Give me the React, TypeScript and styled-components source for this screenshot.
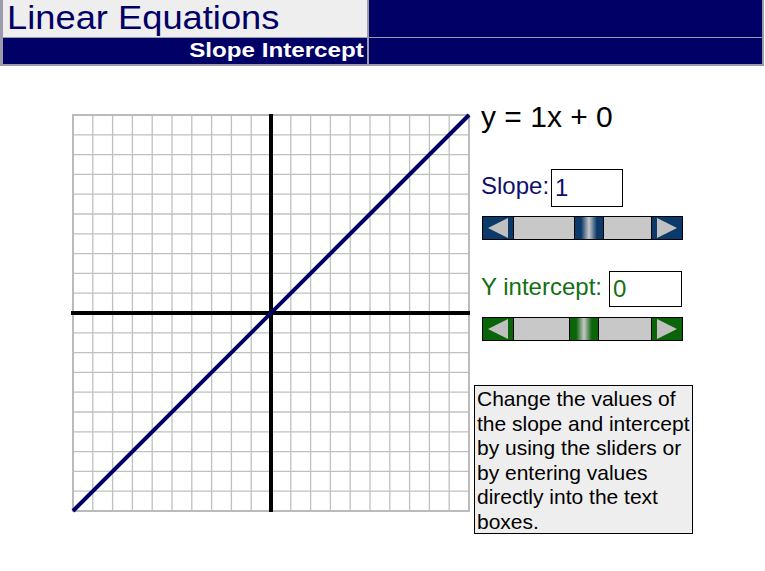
import React, { useState } from 'react';
import styled, { createGlobalStyle } from 'styled-components';

const GlobalStyle = createGlobalStyle`
  html, body { margin: 0; padding: 0; background: #ffffff; }
  body { font-family: "Liberation Sans", Arial, sans-serif; }
`;

const Page = styled.div`
  width: 765px;
  height: 571px;
  overflow: hidden;
  background: #ffffff;
`;

const Header = styled.header`
  display: grid;
  grid-template-columns: 364px 393px;
  grid-template-rows: 37px 26px;
  column-gap: 2px;
  row-gap: 1px;
  width: 764px;
  box-sizing: border-box;
  padding: 0 2px 2px 3px;
  background: #9b9bab;
`;

const TitleCell = styled.div`
  background: #eeeeee;
  padding-left: 4px;
  white-space: nowrap;
  line-height: 37px;
`;

const TitleText = styled.h1`
  display: inline-block;
  margin: 0;
  color: #000066;
  font-weight: normal;
  font-size: 33px;
  line-height: 35px;
  vertical-align: top;
  transform: scaleX(1.1);
  transform-origin: left center;
`;

const NavyCell = styled.div`
  background: #000066;
`;

const SubCell = styled.div`
  background: #000066;
  text-align: right;
  padding-right: 3px;
  line-height: 24px;
  white-space: nowrap;
`;

const SubText = styled.span`
  display: inline-block;
  color: #ffffff;
  font-weight: bold;
  font-size: 21px;
  line-height: 24px;
  vertical-align: top;
  transform: scaleX(1.15);
  transform-origin: right center;
`;

const Main = styled.main`
  display: flex;
  align-items: flex-start;
  padding: 34px 0 0 70px;
`;

const GraphSvg = styled.svg`
  display: block;
  flex: none;
  margin-top: 12px;
`;

const Panel = styled.section`
  display: flex;
  flex-direction: column;
  align-items: flex-start;
  width: 240px;
`;

const Equation = styled.div`
  margin-left: 7px;
  font-size: 30px;
  line-height: 34px;
  color: #000000;
  white-space: nowrap;
`;

const Row = styled.div<{ $top: number }>`
  display: flex;
  align-items: flex-start;
  margin-top: ${(p) => p.$top}px;
  margin-left: 7px;
`;

const Label = styled.label<{ $color: string; $shift: number; $gap: number }>`
  font-size: 24px;
  line-height: 27px;
  color: ${(p) => p.$color};
  margin-top: ${(p) => p.$shift}px;
  margin-right: ${(p) => p.$gap}px;
  white-space: nowrap;
`;

const ValueInput = styled.input<{ $color: string; $w: number; $h: number }>`
  width: ${(p) => p.$w}px;
  height: ${(p) => p.$h}px;
  box-sizing: border-box;
  border: 1px solid #000000;
  background: #ffffff;
  padding: 0 3px;
  margin: 0;
  font-family: "Liberation Sans", Arial, sans-serif;
  font-size: 24px;
  color: ${(p) => p.$color};
  outline: none;
  border-radius: 0;
`;

const Slider = styled.div<{ $top: number }>`
  display: flex;
  width: 201px;
  height: 24px;
  box-sizing: border-box;
  border: 1px solid #000000;
  margin-top: ${(p) => p.$top}px;
  margin-left: 8px;
`;

const ArrowButton = styled.button<{ $bg: string }>`
  flex: none;
  width: 30px;
  height: 100%;
  padding: 0;
  margin: 0;
  border: none;
  background: ${(p) => p.$bg};
  display: flex;
  align-items: center;
  justify-content: center;
  cursor: pointer;
`;

const Track = styled.div`
  position: relative;
  flex: 1;
  background: #c8c8c8;
  border-left: 1px solid #000000;
  border-right: 1px solid #000000;
`;

const Thumb = styled.div<{ $c: string }>`
  position: absolute;
  top: 0;
  bottom: 0;
  width: 30px;
  box-sizing: border-box;
  border-left: 1px solid #000000;
  border-right: 1px solid #000000;
  background: linear-gradient(
    to right,
    ${(p) => p.$c} 0%,
    ${(p) => p.$c} 22%,
    #c8c8c8 50%,
    ${(p) => p.$c} 78%,
    ${(p) => p.$c} 100%
  );
`;

const InfoBox = styled.div`
  margin-top: 44px;
  width: 219px;
  height: 149px;
  box-sizing: border-box;
  border: 1px solid #000000;
  background: #eeeeee;
  padding: 1px 2px;
  font-size: 21px;
  line-height: 24.6px;
  color: #000000;
  white-space: nowrap;
`;

const ArrowIcon: React.FC<{ dir: 'left' | 'right' }> = ({ dir }) => (
  <svg width="22" height="20" viewBox="0 0 22 20">
    {dir === 'left' ? (
      <polygon points="1,10 21,0 21,20" fill="#c0c0c0" />
    ) : (
      <polygon points="21,10 1,0 1,20" fill="#c0c0c0" />
    )}
  </svg>
);

const MIN = -10;
const MAX = 10;

const RangeSlider: React.FC<{
  top: number;
  color: string;
  value: number;
  onChange: (v: number) => void;
}> = ({ top, color, value, onChange }) => {
  const travel = 139 - 30;
  const t = (Math.max(MIN, Math.min(MAX, value)) - MIN) / (MAX - MIN);
  return (
    <Slider $top={top}>
      <ArrowButton $bg={color} onClick={() => onChange(Math.max(MIN, value - 1))} aria-label="decrease">
        <ArrowIcon dir="left" />
      </ArrowButton>
      <Track>
        <Thumb $c={color} style={{ left: Math.round(t * travel) }} />
      </Track>
      <ArrowButton $bg={color} onClick={() => onChange(Math.min(MAX, value + 1))} aria-label="increase">
        <ArrowIcon dir="right" />
      </ArrowButton>
    </Slider>
  );
};

const Graph: React.FC<{ m: number; b: number }> = ({ m, b }) => {
  const x0 = 3;
  const y0 = 3;
  const cell = 19.8;
  const size = cell * 20;
  const cx = x0 + size / 2;
  const cy = y0 + size / 2;
  const toX = (v: number) => cx + v * cell;
  const toY = (v: number) => cy - v * cell;
  const lines: React.ReactNode[] = [];
  for (let i = 1; i < 20; i++) {
    const p = x0 + i * cell;
    lines.push(<line key={'v' + i} x1={p} y1={y0} x2={p} y2={y0 + size} />);
    const q = y0 + i * cell;
    lines.push(<line key={'h' + i} x1={x0} y1={q} x2={x0 + size} y2={q} />);
  }
  return (
    <GraphSvg width={404} height={404} viewBox="0 0 404 404">
      <defs>
        <clipPath id="plot">
          <rect x={x0 - 2} y={y0 - 2} width={size + 4} height={size + 4} />
        </clipPath>
      </defs>
      <g stroke="#c0c0c0" strokeWidth={1.3}>{lines}</g>
      <rect x={x0} y={y0} width={size} height={size} fill="none" stroke="#bbbbbb" strokeWidth={2} />
      <line x1={cx} y1={y0 - 1} x2={cx} y2={y0 + size + 1} stroke="#000000" strokeWidth={4} />
      <line x1={x0 - 2} y1={cy} x2={x0 + size + 1} y2={cy} stroke="#000000" strokeWidth={4} />
      <line
        clipPath="url(#plot)"
        x1={toX(MIN)}
        y1={toY(m * MIN + b)}
        x2={toX(MAX)}
        y2={toY(m * MAX + b)}
        stroke="#000066"
        strokeWidth={4}
      />
    </GraphSvg>
  );
};

const App: React.FC = () => {
  const [slope, setSlope] = useState(1);
  const [intercept, setIntercept] = useState(0);
  const [slopeText, setSlopeText] = useState('1');
  const [interceptText, setInterceptText] = useState('0');

  const updateSlope = (v: number) => {
    setSlope(v);
    setSlopeText(String(v));
  };
  const updateIntercept = (v: number) => {
    setIntercept(v);
    setInterceptText(String(v));
  };

  return (
    <Page>
      <GlobalStyle />
      <Header>
        <TitleCell>
          <TitleText>Linear Equations</TitleText>
        </TitleCell>
        <NavyCell />
        <SubCell>
          <SubText>Slope Intercept</SubText>
        </SubCell>
        <NavyCell />
      </Header>
      <Main>
        <Graph m={slope} b={intercept} />
        <Panel>
          <Equation>
            y = {slope}x + {intercept}
          </Equation>
          <Row $top={35}>
            <Label $color="#10106a" $shift={3} $gap={2}>Slope:</Label>
            <ValueInput
              $color="#10106a"
              $w={72}
              $h={38}
              value={slopeText}
              onChange={(e) => {
                setSlopeText(e.target.value);
                const n = parseFloat(e.target.value);
                if (!isNaN(n)) setSlope(n);
              }}
            />
          </Row>
          <RangeSlider top={9} color="#0b3a6a" value={slope} onChange={updateSlope} />
          <Row $top={31}>
            <Label $color="#137013" $shift={2} $gap={7}>Y intercept:</Label>
            <ValueInput
              $color="#137013"
              $w={73}
              $h={36}
              value={interceptText}
              onChange={(e) => {
                setInterceptText(e.target.value);
                const n = parseFloat(e.target.value);
                if (!isNaN(n)) setIntercept(n);
              }}
            />
          </Row>
          <RangeSlider top={10} color="#0a640a" value={intercept} onChange={updateIntercept} />
          <InfoBox>
            Change the values of
            <br />
            the slope and intercept
            <br />
            by using the sliders or
            <br />
            by entering values
            <br />
            directly into the text
            <br />
            boxes.
          </InfoBox>
        </Panel>
      </Main>
    </Page>
  );
};

export default App;
